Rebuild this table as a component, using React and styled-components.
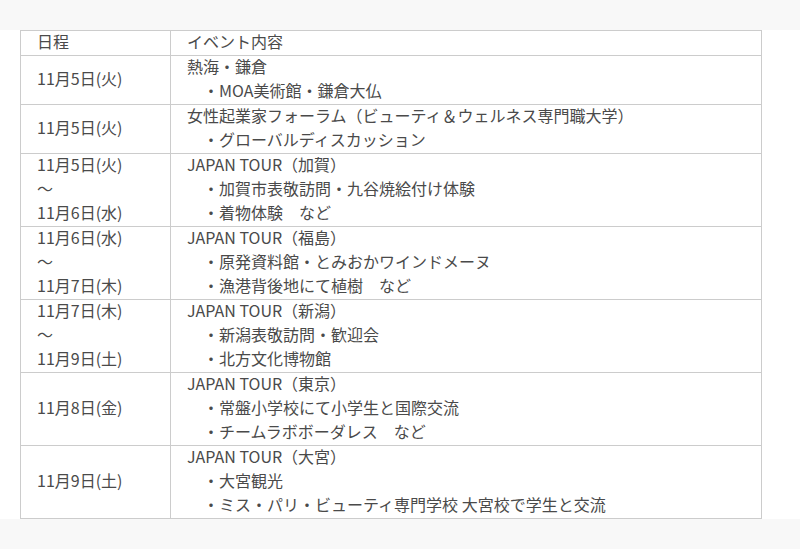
import React from "react";
import styled, { createGlobalStyle } from "styled-components";

const Global = createGlobalStyle`
  html, body { margin: 0; padding: 0; background: #ffffff; }
  body { font-family: "Noto Sans CJK JP", "Noto Sans", sans-serif; color: #4a4a4a; }
`;

const Page = styled.div`
  display: flex;
  flex-direction: column;
  min-height: 549px;
`;

const Band = styled.div`
  height: ${(p) => p.$h}px;
  background: #f8f8f8;
  flex: ${(p) => (p.$grow ? 1 : "none")};
`;

const Content = styled.div`
  padding: 0 38px 0 20px;
`;

const Table = styled.table`
  width: 742px;
  border-collapse: collapse;
  font-size: 16px;
  line-height: 24px;
  color: #4a4a4a;
  table-layout: fixed;
`;

const Cell = styled.td`
  border: 1px solid #cccccc;
  padding: 0 0 0 16px;
  vertical-align: middle;
  text-align: left;
  font-weight: normal;
  white-space: nowrap;
  width: ${(p) => (p.$date ? "133px" : "auto")};
`;

const Stack = styled.div`
  margin: -2px 0 2px;
`;

const Line = styled.div`
  padding-left: ${(p) => (p.$sub ? "1em" : "0")};
`;

const rows = [
  { date: ["11月5日(火)"], title: "熱海・鎌倉", items: ["MOA美術館・鎌倉大仏"] },
  { date: ["11月5日(火)"], title: "女性起業家フォーラム（ビューティ＆ウェルネス専門職大学）", items: ["グローバルディスカッション"] },
  { date: ["11月5日(火)", "～", "11月6日(水)"], title: "JAPAN TOUR（加賀）", items: ["加賀市表敬訪問・九谷焼絵付け体験", "着物体験　など"] },
  { date: ["11月6日(水)", "～", "11月7日(木)"], title: "JAPAN TOUR（福島）", items: ["原発資料館・とみおかワインドメーヌ", "漁港背後地にて植樹　など"] },
  { date: ["11月7日(木)", "～", "11月9日(土)"], title: "JAPAN TOUR（新潟）", items: ["新潟表敬訪問・歓迎会", "北方文化博物館"] },
  { date: ["11月8日(金)"], title: "JAPAN TOUR（東京）", items: ["常盤小学校にて小学生と国際交流", "チームラボボーダレス　など"] },
  { date: ["11月9日(土)"], title: "JAPAN TOUR（大宮）", items: ["大宮観光", "ミス・パリ・ビューティ専門学校 大宮校で学生と交流"] },
];

export default function App() {
  return (
    <Page>
      <Global />
      <Band $h={30} />
      <Content>
        <Table>
          <tbody>
            <tr>
              <Cell as="th" $date><Stack>日程</Stack></Cell>
              <Cell as="th"><Stack>イベント内容</Stack></Cell>
            </tr>
            {rows.map((r, i) => (
              <tr key={i}>
                <Cell $date>
                  <Stack>
                    {r.date.map((d, j) => (
                      <Line key={j}>{d}</Line>
                    ))}
                  </Stack>
                </Cell>
                <Cell>
                  <Stack>
                    <Line>{r.title}</Line>
                    {r.items.map((it, j) => (
                      <Line key={j} $sub>・{it}</Line>
                    ))}
                  </Stack>
                </Cell>
              </tr>
            ))}
          </tbody>
        </Table>
      </Content>
      <Band $h={30} $grow />
    </Page>
  );
}
